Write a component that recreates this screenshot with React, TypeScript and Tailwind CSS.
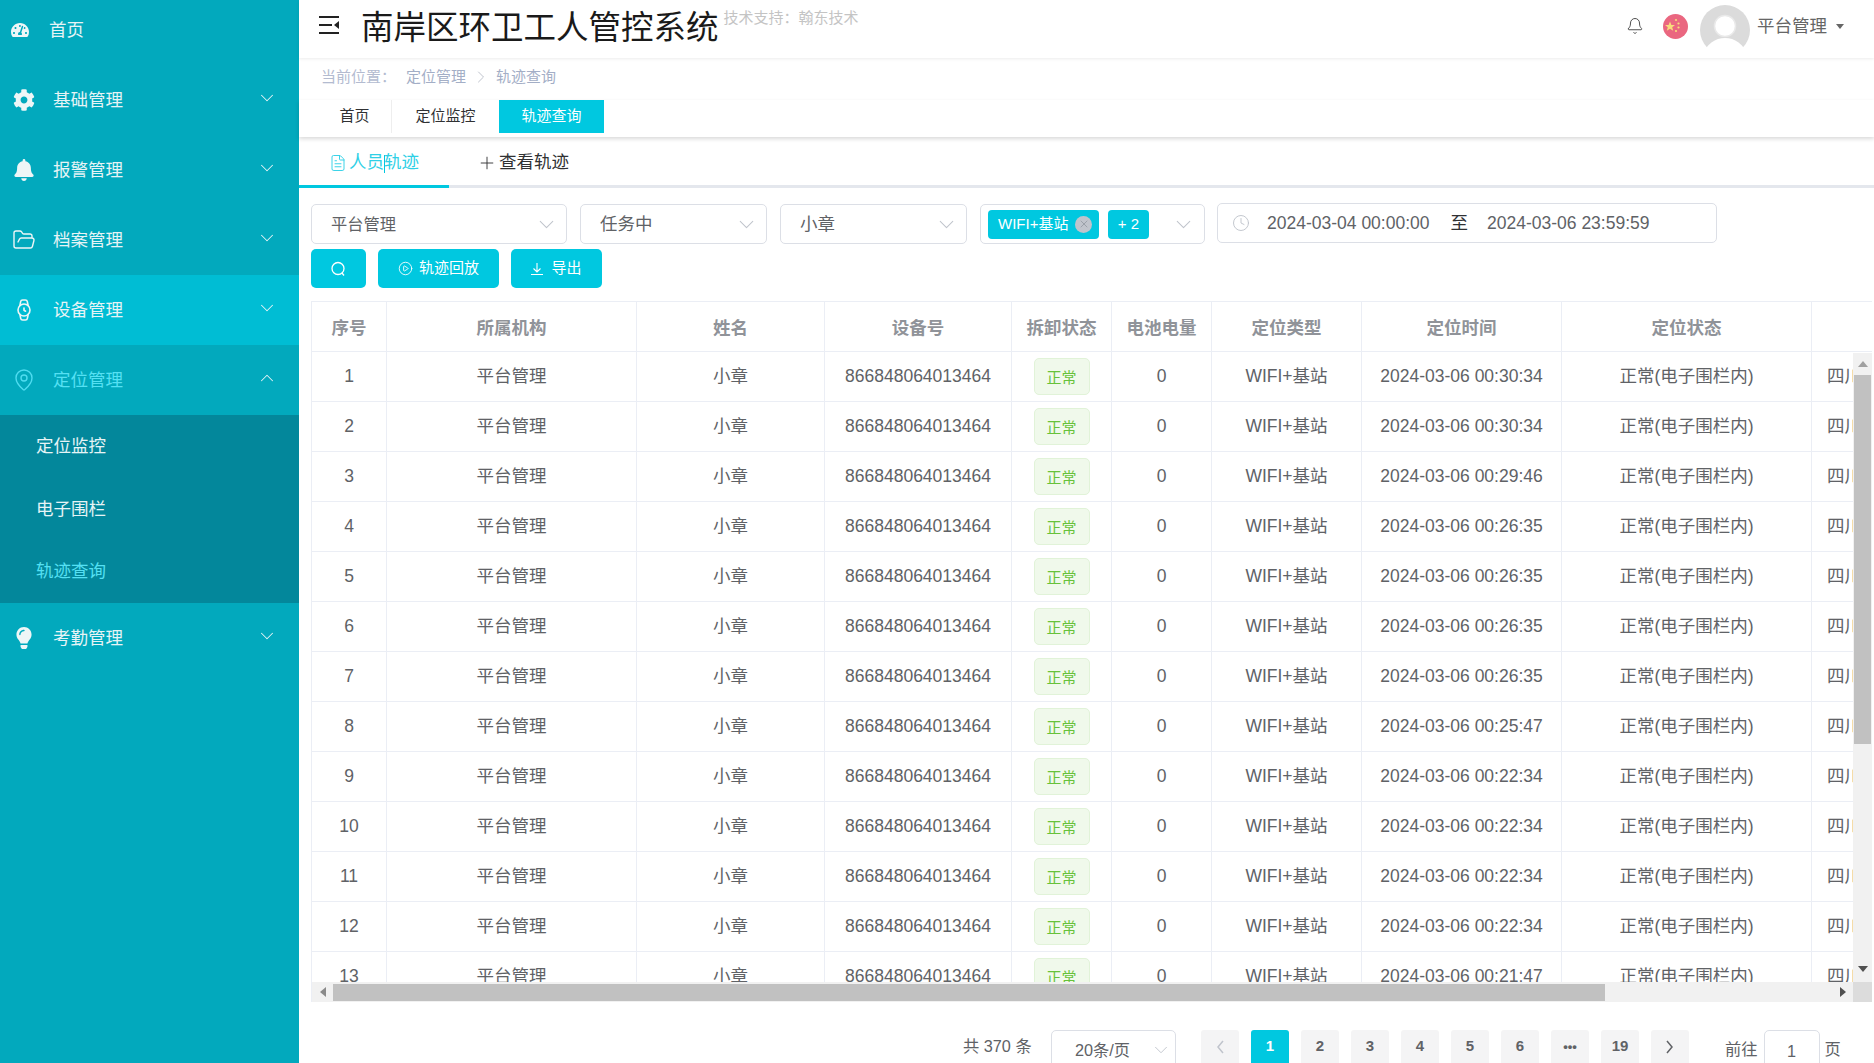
import { ReactNode } from "react";
import { Bell, ChevronDown, ChevronRight, ChevronUp, CirclePlay, Clock, FileText, FolderOpen, MapPin, Plus, Watch, X } from "lucide-react";
import { FaBell, FaCog, FaLightbulb, FaTachometerAlt } from "react-icons/fa";

const times = [
  "00:30:34", "00:30:34", "00:29:46", "00:26:35", "00:26:35", "00:26:35", "00:26:35",
  "00:25:47", "00:22:34", "00:22:34", "00:22:34", "00:22:34", "00:21:47",
];

const headers = ["序号", "所属机构", "姓名", "设备号", "拆卸状态", "电池电量", "定位类型", "定位时间", "定位状态", ""];

const MenuRow = ({ icon, label, active, open }: { icon: ReactNode; label: string; active?: boolean; open?: boolean }) => (
  <div className={`flex h-[70px] items-center pl-[12px] pr-[21px] ${active ? "bg-[#00bdd4]" : ""}`}>
    <span className={`flex w-[24px] justify-center ${open ? "text-[#4fdcf0]" : "text-[#eef6f7]"}`}>{icon}</span>
    <span className={`ml-[17px] text-[17.5px] ${open ? "text-[#55e0f3]" : "text-[#e6f4f6]"}`}>{label}</span>
    {open ? (
      <ChevronUp className="-mt-[5px] ml-auto text-[#e6f4f6]" size={22} strokeWidth={1.1} />
    ) : (
      <ChevronDown className="-mt-[5px] ml-auto text-[#e6f4f6]" size={22} strokeWidth={1.1} />
    )}
  </div>
);

const Sidebar = () => (
  <aside className="h-full w-[299px] shrink-0 bg-[#02a9bd]">
    <div className="mb-[5px] flex h-[60px] items-center pl-[11px]">
      <FaTachometerAlt className="text-[#eef6f7]" size={18} />
      <span className="ml-[20px] text-[17.5px] text-[#e6f4f6]">首页</span>
    </div>
    <MenuRow icon={<FaCog size={22} />} label="基础管理" />
    <MenuRow icon={<FaBell size={22} />} label="报警管理" />
    <MenuRow icon={<FolderOpen size={24} strokeWidth={1.4} />} label="档案管理" />
    <MenuRow active icon={<Watch size={24} strokeWidth={1.6} />} label="设备管理" />
    <MenuRow open icon={<MapPin size={24} strokeWidth={1.4} />} label="定位管理" />
    <div className="flex h-[188px] flex-col bg-[#03879b] pl-[36px] text-[17.5px]">
      <div className="flex h-[62.5px] items-center text-[#e6f4f6]">定位监控</div>
      <div className="flex h-[62.5px] items-center text-[#e6f4f6]">电子围栏</div>
      <div className="flex h-[62.5px] items-center text-[#55e0f3]">轨迹查询</div>
    </div>
    <MenuRow icon={<FaLightbulb size={22} />} label="考勤管理" />
  </aside>
);

const MenuFoldIcon = () => (
  <svg width="20" height="18" viewBox="0 0 20 18" className="-mt-[9px] shrink-0 text-[#222]">
    <path d="M0 1h20M0 9h13M0 17h20" stroke="currentColor" strokeWidth="2" fill="none" />
    <path d="M20 5v8l-5-4z" fill="currentColor" />
  </svg>
);

const FlagIcon = () => (
  <svg width="25" height="25" viewBox="0 0 25 25">
    <circle cx="12.5" cy="12.5" r="12.5" fill="#ea6780" />
    <polygon points="7,7.5 8.4,11 12,11 9.2,13.2 10.2,16.8 7,14.7 3.8,16.8 4.8,13.2 2,11 5.6,11" fill="#f8dc7c" />
    <circle cx="13" cy="6" r="1.1" fill="#f8dc7c" />
    <circle cx="15.5" cy="9.5" r="1.1" fill="#f8dc7c" />
    <circle cx="15.5" cy="13.5" r="1.1" fill="#f8dc7c" />
    <circle cx="13" cy="17" r="1.1" fill="#f8dc7c" />
  </svg>
);

const AvatarIcon = () => (
  <svg width="50" height="50" viewBox="0 0 50 50">
    <circle cx="25" cy="25" r="25" fill="#dbdbdb" />
    <circle cx="25" cy="21" r="10.5" fill="#fff" stroke="#e9e9e9" strokeWidth="1.5" />
    <path d="M2 50 Q10 33 25 33 Q40 33 48 50 Z" fill="#fff" />
  </svg>
);

const Header = () => (
  <header className="flex h-[58px] shrink-0 items-center bg-white pl-[20px] pr-[30px] shadow-[0_1px_3px_rgba(0,0,0,0.08)]">
    <MenuFoldIcon />
    <h1 className="-mt-[3px] ml-[22px] text-[32.5px] font-normal leading-[52px] text-[#1a1a1a]">南岸区环卫工人管控系统</h1>
    <span className="-mt-[22px] ml-[5px] text-[15px] text-[#c4c4c4]">技术支持：翰东技术</span>
    <div className="-mt-[6px] ml-auto flex items-center">
      <Bell className="text-[#444]" size={18} strokeWidth={1.25} />
      <span className="ml-[19px] flex"><FlagIcon /></span>
      <span className="ml-[12px] mt-[8px] flex"><AvatarIcon /></span>
      <span className="ml-[7px] text-[17.5px] text-[#666]">平台管理</span>
      <span className="ml-[9px] h-0 w-0 border-x-[4px] border-t-[5px] border-x-transparent border-t-[#666]" />
    </div>
  </header>
);

const Breadcrumb = () => (
  <div className="flex h-[42px] shrink-0 items-center pb-[4px] pl-[22px] text-[15px]">
    <span className="w-[85px] text-[#b3bbd0]">当前位置：</span>
    <span className="text-[#a3aec6]">定位管理</span>
    <ChevronRight className="mx-[5px] text-[#b8bdc8]" size={20} strokeWidth={1.1} />
    <span className="text-[#a3aec6]">轨迹查询</span>
  </div>
);

const PageTabs = () => (
  <div className="relative z-10 h-[37px] shrink-0 pl-[19px] shadow-[0_2px_4px_rgba(0,0,0,0.15)]">
    <div className="flex h-[33px] text-[15px]">
      <div className="flex w-[74px] items-center justify-center border-r border-[#eeeeee] text-[#303133]">首页</div>
      <div className="flex w-[107px] items-center justify-center text-[#303133]">定位监控</div>
      <div className="flex w-[105px] items-center justify-center bg-[#00c8e0] text-white">轨迹查询</div>
    </div>
  </div>
);

const InnerTabs = () => (
  <div className="flex h-[51px] shrink-0 border-b-[3px] border-[#e4e7ed]">
    <div className="-mb-[3px] flex w-[150px] items-center gap-[2px] border-b-[3px] border-[#00c8e0] pl-[30px] pt-[3px] text-[17.5px] text-[#2fd0e6]">
      <FileText size={18} strokeWidth={1.25} />
      <span>人员<span className="-mr-px inline-block h-[18px] w-px bg-[#00c8e0] align-middle" />轨迹</span>
    </div>
    <div className="flex items-center gap-[2px] pl-[28px] pt-[3px] text-[17.5px] text-[#303133]">
      <Plus size={20} strokeWidth={1.1} />
      <span>查看轨迹</span>
    </div>
  </div>
);

const SelectBox = ({ children, className }: { children: ReactNode; className: string }) => (
  <div className={`flex h-[40px] items-center rounded-[5px] border border-[#dcdfe6] pl-[19px] pr-[7px] text-[#606266] ${className}`}>
    {children}
    <ChevronDown className="ml-auto text-[#c0c4cc]" size={25} strokeWidth={1} />
  </div>
);

const Filters = () => (
  <div className="ml-[12px] mt-[16px] flex shrink-0 items-start gap-[13px]">
    <SelectBox className="w-[256px] text-[16.25px]">平台管理</SelectBox>
    <SelectBox className="w-[187px] text-[17.5px]">任务中</SelectBox>
    <SelectBox className="w-[187px] text-[17.5px]">小章</SelectBox>
    <div className="flex h-[40px] w-[225px] items-center rounded-[5px] border border-[#dcdfe6] pl-[7px] pr-[8px]">
      <span className="flex h-[29px] w-[111px] items-center rounded-[4px] bg-[#00c8e0] pl-[10px] text-[15px] text-white">
        WIFI+基站
        <span className="ml-[7px] flex h-[17px] w-[17px] items-center justify-center rounded-full bg-[#c0c4cc] text-[#8f959e]">
          <X size={12} strokeWidth={1.5} />
        </span>
      </span>
      <span className="ml-[9px] flex h-[29px] w-[41px] items-center justify-center rounded-[4px] bg-[#00c8e0] text-[15px] text-white">+ 2</span>
      <ChevronDown className="ml-auto text-[#c0c4cc]" size={25} strokeWidth={1} />
    </div>
    <div className="-ml-px -mt-px flex h-[40px] w-[500px] items-center rounded-[5px] border border-[#dcdfe6] pl-[14px] text-[17.5px] text-[#606266]">
      <Clock className="text-[#c0c4cc]" size={18} strokeWidth={1.25} />
      <span className="ml-[17px] whitespace-nowrap">2024-03-04 00:00:00</span>
      <span className="ml-[21px] text-[#303133]">至</span>
      <span className="ml-[19px] whitespace-nowrap">2024-03-06 23:59:59</span>
    </div>
  </div>
);

const SearchIcon = () => (
  <svg width="15" height="16" viewBox="0 0 15 16" fill="none" stroke="currentColor" strokeWidth="1.3">
    <circle cx="7" cy="7.5" r="6" />
    <path d="M11 12l2 2.5" />
  </svg>
);

const ExportIcon = () => (
  <svg width="12" height="12" viewBox="0 0 12 12" fill="none" stroke="currentColor" strokeWidth="1.1">
    <path d="M6 0v8.5M2.5 5.5L6 9l3.5-3.5M0 11.5h12" />
  </svg>
);

const Actions = () => (
  <div className="ml-[12px] mt-[5px] flex h-[39px] shrink-0 gap-[12px] text-[15px] text-white">
    <button className="flex w-[55px] items-center justify-center rounded-[5px] bg-[#00c8e0]"><SearchIcon /></button>
    <button className="flex w-[121px] items-center justify-center gap-[6px] rounded-[5px] bg-[#00c8e0]">
      <CirclePlay size={15} strokeWidth={1.4} />
      轨迹回放
    </button>
    <button className="flex w-[91px] items-center justify-center gap-[8px] rounded-[5px] bg-[#00c8e0]">
      <ExportIcon />
      导出
    </button>
  </div>
);

const Th = ({ children }: { children: ReactNode }) => (
  <th className="h-[50px] border-b border-r border-[#ebeef5] pt-[3px] text-center text-[17.5px] font-bold text-[#909399]">{children}</th>
);

const Td = ({ children }: { children: ReactNode }) => (
  <td className="h-[50px] whitespace-nowrap border-b border-r border-[#ebeef5] text-center text-[17.5px] text-[#606266]">{children}</td>
);

const Scrollbars = () => (
  <>
    <div className="absolute bottom-0 left-0 flex h-[20px] w-[1542px] items-center bg-[#f1f1f1]">
      <span className="ml-[8px] h-0 w-0 border-y-[5px] border-r-[6px] border-y-transparent border-r-[#8a8a8a]" />
      <span className="ml-[7px] h-[17px] w-[1272px] bg-[#c1c1c1]" />
      <span className="ml-auto mr-[8px] h-0 w-0 border-y-[5px] border-l-[6px] border-y-transparent border-l-[#505050]" />
    </div>
    <div className="absolute bottom-0 right-0 h-[20px] w-[19px] bg-[#dcdcdc]" />
    <div className="absolute bottom-[20px] right-0 top-[51px] flex w-[19px] flex-col items-center bg-[#f1f1f1]">
      <span className="mt-[8px] h-0 w-0 border-x-[5px] border-b-[6px] border-x-transparent border-b-[#a0a0a0]" />
      <span className="mt-[8px] h-[369px] w-[17px] bg-[#c1c1c1]" />
      <span className="mb-[10px] mt-auto h-0 w-0 border-x-[5px] border-t-[6px] border-x-transparent border-t-[#505050]" />
    </div>
  </>
);

const RecordTable = () => (
  <div className="relative ml-[12px] mt-[13px] h-[701px] w-[1561px] shrink-0 overflow-hidden border-l border-t border-[#ebeef5]">
    <table className="w-[1849px] table-fixed border-separate border-spacing-0">
      <colgroup>
        <col className="w-[75px]" />
        <col className="w-[250px]" />
        <col className="w-[188px]" />
        <col className="w-[187px]" />
        <col className="w-[100px]" />
        <col className="w-[100px]" />
        <col className="w-[150px]" />
        <col className="w-[200px]" />
        <col className="w-[250px]" />
        <col className="w-[349px]" />
      </colgroup>
      <thead>
        <tr>
          {headers.map((h, i) => (
            <Th key={i}>{h}</Th>
          ))}
        </tr>
      </thead>
      <tbody>
        {times.map((t, i) => (
          <tr key={i}>
            <Td>{i + 1}</Td>
            <Td>平台管理</Td>
            <Td>小章</Td>
            <Td>866848064013464</Td>
            <Td>
              <span className="mx-auto flex h-[37px] w-[56px] items-center justify-center rounded-[5px] border border-[#e1f3d8] bg-[#f0f9eb] pt-[3px] text-[15px] text-[#67c23a]">正常</span>
            </Td>
            <Td>0</Td>
            <Td>WIFI+基站</Td>
            <Td>2024-03-06 {t}</Td>
            <Td>正常(电子围栏内)</Td>
            <td className="h-[50px] whitespace-nowrap border-b border-[#ebeef5] pl-[15px] text-left text-[17.5px] text-[#606266]">四川省重庆市南岸区</td>
          </tr>
        ))}
      </tbody>
    </table>
    <Scrollbars />
  </div>
);

const Pager = () => (
  <div className="ml-[664px] mt-[28px] flex shrink-0 items-start text-[16.25px] text-[#606266]">
    <span className="w-[70px] whitespace-nowrap pt-[4px]">共 370 条</span>
    <div className="ml-[18px] flex h-[40px] w-[125px] items-center rounded-[5px] border border-[#dcdfe6] pl-[23px] pr-[3px]">
      20条/页
      <ChevronDown className="ml-auto text-[#c0c4cc]" size={22} strokeWidth={1} />
    </div>
    <div className="ml-[25px] flex gap-[12px] text-[15px] font-bold">
      <span className="flex h-[38px] w-[38px] items-center justify-center rounded-[3px] bg-[#f4f4f5] pb-[5px] text-[#c0c4cc]">
        <svg width="8" height="14" viewBox="0 0 8 14" fill="none" stroke="currentColor" strokeWidth="1.5"><path d="M7 1L2 7l5 6" /></svg>
      </span>
      <span className="flex h-[38px] w-[38px] items-center justify-center rounded-[3px] bg-[#00c8e0] pb-[5px] text-white">1</span>
      {["2", "3", "4", "5", "6", "•••", "19"].map(p => (
        <span key={p} className={`flex h-[38px] w-[38px] items-center justify-center rounded-[3px] bg-[#f4f4f5] pb-[5px] ${p === "•••" ? "text-[13px]" : ""}`}>{p}</span>
      ))}
      <span className="flex h-[38px] w-[38px] items-center justify-center rounded-[3px] bg-[#f4f4f5] pb-[5px]">
        <svg width="8" height="14" viewBox="0 0 8 14" fill="none" stroke="currentColor" strokeWidth="1.5"><path d="M1 1l5 6-5 6" /></svg>
      </span>
    </div>
    <span className="ml-[36px] whitespace-nowrap pt-[7px]">前往</span>
    <div className="ml-[6px] flex h-[40px] w-[56px] items-center justify-center rounded-[5px] border border-[#dcdfe6] pt-[2px]">1</div>
    <span className="ml-[5px] pt-[7px]">页</span>
  </div>
);

export default function App() {
  return (
    <div className="flex h-screen overflow-hidden bg-white font-['Liberation_Sans','Noto_Sans_CJK_SC',sans-serif]">
      <Sidebar />
      <main className="flex min-w-0 flex-1 flex-col">
        <Header />
        <Breadcrumb />
        <PageTabs />
        <InnerTabs />
        <Filters />
        <Actions />
        <RecordTable />
        <Pager />
      </main>
    </div>
  );
}
